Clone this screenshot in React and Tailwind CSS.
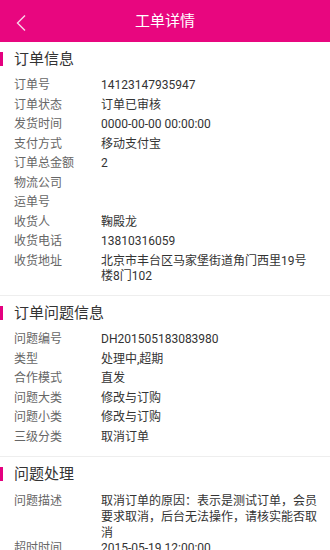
import React from "react";

const font = { fontFamily: 'Roboto, "Noto Sans CJK SC", sans-serif' };

function Row({ label, lines, cls }) {
  return (
    <div className={"flex " + cls}>
      <div className="shrink-0 pl-[14px] box-content text-[#666]" style={{ width: 87 }}>
        {label}
      </div>
      <div className="flex-1 text-[#333]">
        {lines.map((l, i) => (
          <div key={i} className="whitespace-nowrap">
            {l}
          </div>
        ))}
      </div>
    </div>
  );
}

function Section({ title, rows, first }) {
  return (
    <div className={(first ? "" : "border-t border-[#eeeeee] ") + "pb-[9px]"}>
      <div className="h-[34px] flex items-center relative">
        <div className="absolute left-0 top-[10px] w-[3px] h-[14px] bg-[#e4007f]" />
        <span className="pl-[14px] text-[15px] text-[#333]">{title}</span>
      </div>
      {rows.map((r, i) => (
        <Row key={i} label={r[0]} lines={r[1]} cls={r[2] || "py-[2.25px] leading-[15px]"} />
      ))}
    </div>
  );
}

export default function App() {
  return (
    <div className="w-[330px] h-[550px] overflow-hidden bg-white text-[12px]" style={font}>
      <div className="h-[42px] bg-[#e8067f] relative flex items-center justify-center">
        <svg className="absolute left-[15px] top-[14px]" width="12" height="18" viewBox="0 0 12 18">
          <polyline points="10,1.5 2.5,9 10,16.5" fill="none" stroke="#f9d4ea" strokeWidth="1.4" />
        </svg>
        <span className="text-white text-[15px]">工单详情</span>
      </div>
      <Section
        first
        title="订单信息"
        rows={[
          ["订单号", ["14123147935947"]],
          ["订单状态", ["订单已审核"]],
          ["发货时间", ["0000-00-00 00:00:00"]],
          ["支付方式", ["移动支付宝"]],
          ["订单总金额", ["2"]],
          ["物流公司", [""]],
          ["运单号", [""]],
          ["收货人", ["鞠殿龙"]],
          ["收货电话", ["13810316059"]],
          ["收货地址", ["北京市丰台区马家堡街道角门西里19号", "楼8门102"]],
        ]}
      />
      <Section
        title="订单问题信息"
        rows={[
          ["问题编号", ["DH201505183083980"]],
          ["类型", ["处理中,超期"]],
          ["合作模式", ["直发"]],
          ["问题大类", ["修改与订购"]],
          ["问题小类", ["修改与订购"]],
          ["三级分类", ["取消订单"]],
        ]}
      />
      <Section
        title="问题处理"
        rows={[
          ["问题描述", ["取消订单的原因：表示是测试订单，会员", "要求取消，后台无法操作，请核实能否取", "消"], "pt-[2px] leading-[16px]"],
          ["超时时间", ["2015-05-19 12:00:00"], "pt-0 leading-[15px]"],
        ]}
      />
    </div>
  );
}
